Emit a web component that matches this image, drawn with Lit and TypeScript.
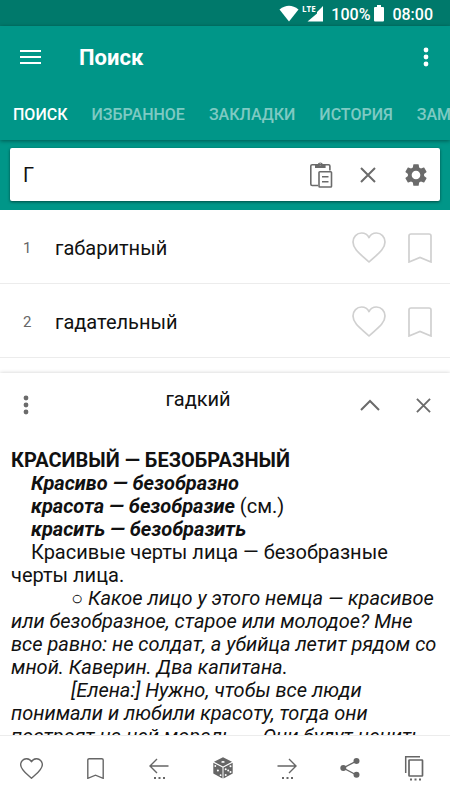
import { LitElement, html, svg, css } from "lit";
import { customElement, state } from "lit/decorators.js";
import { classMap } from "lit/directives/class-map.js";

const heart = (w: number, h: number) => html`
  <svg width=${w} height=${h} viewBox="0 0 34 31" fill="none" stroke="currentColor" stroke-linejoin="round" aria-hidden="true">
    <path class="line" d="M17 30C9 22.500 1 17.500 1 10C1 4.800 4.800 1 9.600 1C13 1 15.600 2.800 17 5.600C18.400 2.800 21 1 24.400 1C29.200 1 33 4.800 33 10C33 17.500 25 22.500 17 30Z"/>
  </svg>`;

const bookmark = (w: number, h: number) => html`
  <svg width=${w} height=${h} viewBox="0 0 24 30" fill="none" stroke="currentColor" aria-hidden="true">
    <path class="line" d="M1 29V3Q1 1 3 1H21Q23 1 23 3V29L12 24.500Z"/>
  </svg>`;

const cross = (s: number) => html`
  <svg width=${s} height=${s} viewBox="0 0 16 16" fill="none" stroke="currentColor" stroke-width="2" aria-hidden="true">
    <path d="M1 1L15 15M15 1L1 15"/>
  </svg>`;

const dots = html`
  <svg width="6" height="20" viewBox="0 0 6 20" fill="currentColor" aria-hidden="true">
    <circle cx="3" cy="3" r="2.400"/><circle cx="3" cy="10" r="2.400"/><circle cx="3" cy="17" r="2.400"/>
  </svg>`;

const ellipsis = svg`<path stroke="none" fill="currentColor" d="M6 22h2v2h-2zM10.500 22h2v2h-2zM15 22h2v2h-2z"/>`;

const paste = html`
  <svg width="24" height="28" viewBox="0 0 24 28" fill="none" stroke="currentColor" stroke-width="1.600" aria-hidden="true">
    <path d="M9 24.500H3.200Q1.800 24.500 1.800 23V5Q1.800 3.700 3.200 3.700H19.500Q20.900 3.700 20.900 5V9.500"/>
    <path fill="currentColor" stroke="none" d="M6 3.500H8.600A2.800 2.800 0 0 1 14 3.500H16.600V7H6ZM11.300 2.600A1 1 0 1 0 11.300 4.600A1 1 0 1 0 11.300 2.600Z" fill-rule="evenodd"/>
    <rect x="10" y="10.800" width="12.500" height="15.200" rx="0.800"/>
    <path d="M13 15.800H19.500M13 20.800H19.500"/>
  </svg>`;

const gear = html`
  <svg width="26" height="26" viewBox="0 0 24 24" fill="currentColor" aria-hidden="true">
    <path d="M19.430 12.980c.04-.32.07-.64.07-.98s-.03-.66-.07-.98l2.110-1.650c.19-.15.24-.42.12-.64l-2-3.460c-.12-.22-.39-.3-.61-.22l-2.490 1c-.52-.4-1.080-.73-1.690-.98l-.38-2.650C14.460 2.180 14.250 2 14 2h-4c-.25 0-.46.18-.49.42l-.38 2.650c-.61.25-1.170.59-1.690.98l-2.490-1c-.23-.09-.49 0-.61.22l-2 3.460c-.13.22-.07.49.12.64l2.110 1.650c-.04.32-.07.65-.07.98s.03.66.07.98l-2.110 1.650c-.19.15-.24.42-.12.64l2 3.460c.12.22.39.3.61.22l2.490-1c.52.4 1.080.73 1.690.98l.38 2.650c.03.24.24.42.49.42h4c.25 0 .46-.18.49-.42l.38-2.650c.61-.25 1.170-.59 1.690-.98l2.490 1c.23.09.49 0 .61-.22l2-3.460c.12-.22.07-.49-.12-.64l-2.110-1.650zM12 16c-2.210 0-4-1.790-4-4s1.790-4 4-4 4 1.790 4 4-1.790 4-4 4z"/>
  </svg>`;

const arrowLeft = html`
  <svg width="22" height="26" viewBox="0 0 22 26" fill="none" stroke="currentColor" stroke-width="1.400" aria-hidden="true">
    <path d="M20.500 11H2M9 4L2 11L9 18"/>${ellipsis}
  </svg>`;

const arrowRight = html`
  <svg width="22" height="26" viewBox="0 0 22 26" fill="none" stroke="currentColor" stroke-width="1.400" aria-hidden="true">
    <path d="M1.500 11H20M13 4L20 11L13 18"/>${ellipsis}
  </svg>`;

const dice = html`
  <svg width="20" height="22" viewBox="0 0 20 22" fill="currentColor" aria-hidden="true">
    <path d="M10 .3L19 4.800L10 9.500L1 4.800Z"/>
    <path d="M.3 5.800L9.500 10.500V21.500L.3 16.500Z"/>
    <path d="M19.700 5.800L10.500 10.500V21.500L19.700 16.500Z"/>
    <g fill="#fff">
      <ellipse cx="10" cy="4.900" rx="1.700" ry=".9"/>
      <circle cx="2.300" cy="9" r=".9"/><circle cx="4.900" cy="13.500" r="1"/><circle cx="7.600" cy="18.200" r=".9"/>
      <circle cx="12.700" cy="12.300" r="1"/><circle cx="17.500" cy="9.300" r="1"/><circle cx="15.200" cy="13.500" r="1"/>
      <circle cx="12.700" cy="18" r="1"/><circle cx="17.500" cy="15" r="1"/>
    </g>
  </svg>`;

const share = html`
  <svg width="20" height="22" viewBox="0 0 20 22" fill="currentColor" aria-hidden="true">
    <path d="M16.500 4L3.300 11L16.500 18" fill="none" stroke="currentColor" stroke-width="1.400"/>
    <circle cx="16.500" cy="4" r="3"/><circle cx="3.300" cy="11" r="3"/><circle cx="16.500" cy="17.800" r="3"/>
  </svg>`;

const copy = html`
  <svg width="20" height="26" viewBox="0 0 20 26" fill="none" stroke="currentColor" stroke-width="1.500" aria-hidden="true">
    <path d="M1.700 18V1.800H16"/>
    <rect x="5" y="5" width="13.500" height="16" rx="0.500" stroke-width="1.700"/>
    <path stroke="none" fill="currentColor" d="M6 23.500h2v2h-2zM10.500 23.500h2v2h-2zM15 23.500h2v2h-2z"/>
  </svg>`;

@customElement("app-root")
export class AppRoot extends LitElement {
  @state() private tab = 0;
  @state() private query = "Г";

  private tabs = ["ПОИСК", "ИЗБРАННОЕ", "ЗАКЛАДКИ", "ИСТОРИЯ", "ЗАМЕТКИ"];
  private words = ["габаритный", "гадательный"];
  private tools = [
    { label: "В избранное", icon: heart(23, 21) },
    { label: "Закладка", icon: bookmark(17, 21) },
    { label: "Назад", icon: arrowLeft },
    { label: "Случайное слово", icon: dice },
    { label: "Вперёд", icon: arrowRight },
    { label: "Поделиться", icon: share },
    { label: "Копировать", icon: copy },
  ];

  static styles = css`
    :host {
      display: flex;
      flex-direction: column;
      height: 100vh;
      overflow: hidden;
      background: #fff;
      color: #111;
      font-family: Roboto, "Noto Sans", sans-serif;
      font-size: 20px;
    }
    button {
      display: flex;
      align-items: center;
      justify-content: center;
      padding: 0;
      border: 0;
      background: none;
      color: inherit;
      font: inherit;
      cursor: pointer;
    }
    svg { display: block; flex: none; }
    .line { stroke-width: 1.400px; vector-effect: non-scaling-stroke; }
    li .line { stroke-width: 1.700px; }
    .status {
      display: flex;
      flex: none;
      align-items: center;
      justify-content: flex-end;
      height: 26px;
      padding: 2px 17px 0 0;
      box-sizing: border-box;
      background: #00796b;
      color: #fff;
      font-size: 16px;
      font-weight: 500;
    }
    .signals { margin-right: 7px; }
    .lte { font: 700 8px "Open Sans", sans-serif; }
    .battery { margin: 0 8px 0 4px; }
    .bar {
      position: relative;
      flex: none;
      background: #009688;
      color: #fff;
      box-shadow: 0 1px 4px rgba(0, 0, 0, 0.4);
    }
    .title {
      display: flex;
      align-items: center;
      height: 62px;
      padding: 0 21px 0 20px;
    }
    h1 {
      flex: 1;
      margin: 0 0 0 38px;
      font-size: 22px;
      font-weight: 700;
    }
    .tabs {
      display: flex;
      gap: 24px;
      height: 52px;
      padding-left: 13px;
      overflow: hidden;
    }
    .tab {
      flex: none;
      color: rgba(255, 255, 255, 0.5);
      font-size: 16px;
      font-weight: 500;
    }
    .tab.on { color: #fff; }
    .search {
      flex: none;
      padding: 8px 10px 9px;
      background: #009688;
    }
    .box {
      display: flex;
      align-items: center;
      height: 53px;
      padding-right: 11px;
      border-radius: 2px;
      background: #fff;
      color: #6b6b6b;
      box-shadow: 0 1px 3px rgba(0, 0, 0, 0.5);
    }
    .box input {
      flex: 1;
      min-width: 0;
      padding: 0 0 0 13px;
      border: 0;
      outline: 0;
      background: none;
      color: #111;
      font: inherit;
    }
    .box .clear { margin: 0 27px; }
    ol { flex: none; margin: 0; padding: 0 0 15px; list-style: none; }
    li {
      display: flex;
      align-items: center;
      height: 74px;
      padding: 2px 18px 0 23px;
      box-sizing: border-box;
      border-bottom: 1px solid #ececec;
    }
    .num { width: 32px; color: #666; font-size: 15px; }
    .word { flex: 1; }
    li button { margin-left: 22px; color: #d0d0d0; }
    .panel {
      display: flex;
      flex: 1;
      flex-direction: column;
      min-height: 0;
      background: #fff;
      box-shadow: 0 0 4px rgba(0, 0, 0, 0.2);
    }
    .head {
      display: flex;
      flex: none;
      align-items: center;
      height: 64px;
      padding: 0 19px 0 23px;
      color: #6b6b6b;
    }
    h2 {
      flex: 1;
      margin: 0 0 12px;
      padding-left: 7px;
      color: #111;
      font-size: 20px;
      font-weight: 400;
      text-align: center;
    }
    .up { margin: 0 36px 0 0; }
    article {
      flex: 1;
      min-height: 0;
      padding: 12px 10px 0 11px;
      overflow: hidden;
      line-height: 23px;
    }
    h3, p { margin: 0; }
    h3 { font-size: 20px; font-weight: 700; }
    p { text-indent: 20px; }
    .quote { text-indent: 60px; font-style: italic; }
    nav {
      display: flex;
      flex: none;
      height: 65px;
      padding-right: 4px;
      box-sizing: border-box;
      border-top: 1px solid #ececec;
      background: #fff;
      color: #666;
    }
    nav button { flex: 1; }
  `;

  render() {
    return html`
      <div class="status">
        <svg class="signals" width="45" height="18" viewBox="0 0 45 18" fill="currentColor" aria-hidden="true">
          <path d="M.5 4.500Q10 -3 19.500 4.500L10 16.500Z"/>
          <path d="M44 1V16.500H28.500L38 8.500V7Z"/>
          <text class="lte" x="23" y="7">LTE</text>
        </svg>
        <span>100%</span>
        <svg class="battery" width="10" height="18" viewBox="0 0 10 18" fill="currentColor" aria-hidden="true">
          <path d="M3 0H7V2H9Q10 2 10 3V15.500Q10 16.500 9 16.500H1Q0 16.500 0 15.500V3Q0 2 1 2H3Z"/>
        </svg>
        <span>08:00</span>
      </div>
      <header class="bar">
        <div class="title">
          <button aria-label="Меню">
            <svg width="21" height="16" viewBox="0 0 21 16" fill="currentColor"><path d="M0 1h21v2h-21zM0 7h21v2h-21zM0 13h21v2h-21z"/></svg>
          </button>
          <h1>Поиск</h1>
          <button aria-label="Ещё">${dots}</button>
        </div>
        <div class="tabs" role="tablist">
          ${this.tabs.map((t, i) => html`
            <button role="tab" aria-selected=${i === this.tab ? "true" : "false"}
              class=${classMap({ tab: true, on: i === this.tab })}
              @click=${() => (this.tab = i)}>${t}</button>`)}
        </div>
      </header>
      <div class="search">
        <div class="box">
          <input type="text" aria-label="Поиск" .value=${this.query}
            @input=${(e: Event) => (this.query = (e.target as HTMLInputElement).value)}>
          <button aria-label="Вставить">${paste}</button>
          <button class="clear" aria-label="Очистить" @click=${() => (this.query = "")}>${cross(16)}</button>
          <button aria-label="Настройки">${gear}</button>
        </div>
      </div>
      <ol>
        ${this.words.map((w, i) => html`
          <li>
            <span class="num">${i + 1}</span><span class="word">${w}</span>
            <button aria-label="В избранное">${heart(34, 31)}</button>
            <button aria-label="Закладка">${bookmark(24, 30)}</button>
          </li>`)}
      </ol>
      <section class="panel">
        <div class="head">
          <button aria-label="Действия">${dots}</button>
          <h2>гадкий</h2>
          <button class="up" aria-label="Развернуть">
            <svg width="20" height="12" viewBox="0 0 20 12" fill="none" stroke="currentColor" stroke-width="2"><path d="M1 11L10 2L19 11"/></svg>
          </button>
          <button aria-label="Закрыть">${cross(15)}</button>
        </div>
        <article>
          <h3>КРАСИВЫЙ — БЕЗОБРАЗНЫЙ</h3>
          <p><b><i>Красиво — безобразно</i></b></p>
          <p><b><i>красота — безобразие</i></b> (см.)</p>
          <p><b><i>красить — безобразить</i></b></p>
          <p>Красивые черты лица — безобразные черты лица.</p>
          <p class="quote">○ Какое лицо у этого немца — красивое или безобразное, старое или молодое? Мне все равно: не солдат, а убийца летит рядом со мной. Каверин. Два капитана.</p>
          <p class="quote">[Елена:] Нужно, чтобы все люди понимали и любили красоту, тогда они построят на ней мораль. — Они будут ценить</p>
        </article>
      </section>
      <nav>
        ${this.tools.map((t) => html`<button aria-label=${t.label}>${t.icon}</button>`)}
      </nav>
    `;
  }
}
